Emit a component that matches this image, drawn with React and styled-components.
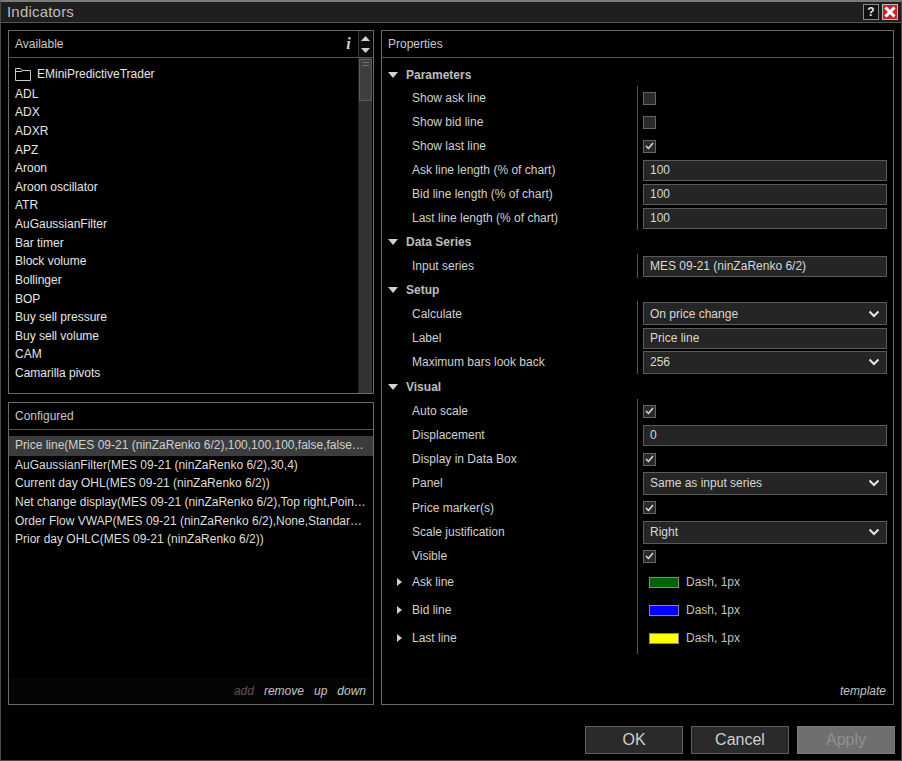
import React from 'react';
import styled, { createGlobalStyle } from 'styled-components';

const Global = createGlobalStyle`
  html, body { margin: 0; padding: 0; background: #000; }
  body { font-family: "Liberation Sans", Arial, sans-serif; font-size: 12px; color: #e4e4e4; }
  * { box-sizing: border-box; }
`;

const Win = styled.div`
  width: 902px; height: 761px; background: #000; border: 1px solid #4a4a4a; border-top: 2px solid #7a7a7a;
  display: flex; flex-direction: column; overflow: hidden;
`;
const TitleBar = styled.div`
  height: 21px; flex: none; background: #1f1f1f; border-bottom: 1px solid #555; display: flex; align-items: center;
  justify-content: space-between; padding: 0 3px 0 6px;
`;
const Title = styled.div`font-size: 15px; color: #bdbdbd; letter-spacing: .2px; margin-top: -2px;`;
const TitleBtns = styled.div`display: flex; gap: 3px;`;
const HelpBtn = styled.div`
  width: 16px; height: 16px; border: 1px solid #8a8a8a; background: #111; color: #e6e6e6;
  font-weight: bold; font-size: 12px; line-height: 14px; text-align: center;
`;
const CloseBtn = styled.div`
  width: 16px; height: 16px; background: #c8262c; border: 1px solid #bbb; display: flex; align-items: center; justify-content: center;
`;
const Body = styled.div`
  flex: none; display: grid; grid-template-columns: 366px 513px; column-gap: 7px; padding: 7px 0 0 7px; height: 682px; align-items: start;
`;
const Left = styled.div`display: flex; flex-direction: column; gap: 8px; height: 675px;`;
const Panel = styled.div`
  border: 1px solid #6a6a6a; background: #000; display: flex; flex-direction: column; position: relative;
  height: ${p => p.$h}px;
`;
const Head = styled.div`
  height: 27px; flex: none; border-bottom: 1px solid #555; display: flex; align-items: center;
  padding-left: 6px; color: #c8c8c8; justify-content: space-between;
`;
const InfoArea = styled.div`display: flex; align-items: stretch; height: 100%;`;
const InfoI = styled.div`
  font-family: "Liberation Serif", serif; font-style: italic; font-weight: bold; font-size: 16px; color: #d0d0d0;
  width: 15px; margin-right: 2px; display: flex; align-items: center; justify-content: center;
`;
const Spin = styled.div`
  width: 14px; background: #0c0c0c; border-left: 1px solid #3c3c3c; display: flex; flex-direction: column;
  align-items: center; justify-content: center; gap: 7px; margin-right: 1px;
`;
const ListArea = styled.div`flex: 1; display: flex; min-height: 0;`;
const List = styled.div`flex: 1; padding: 7px 0 0 6px; overflow: hidden;`;
const ListRow = styled.div`height: 18.63px; line-height: 18.63px; color: #e6e6e6; white-space: nowrap;`;
const FolderRow = styled(ListRow)`display: flex; align-items: center; gap: 6px; height: 19.67px; line-height: 19.67px;`;
const ScrollTrack = styled.div`width: 14px; margin-right: 1px; background: #333; border-left: 1px solid #222; flex: none;`;
const Thumb = styled.div`
  height: 42px; margin: 1px 0 0 0; background: #3e3e3e; border: 1px solid #5c5c5c; padding: 2px 2px 0;
`;
const Grip = styled.div`height: 1px; background: #707070; margin-bottom: 2px;`;
const CfgList = styled.div`flex: 1; padding-top: 6px; overflow: hidden;`;
const CfgRow = styled.div`
  height: ${p => p.$sel ? 19.5 : 18.7}px; line-height: ${p => p.$sel ? 19.5 : 18.7}px; padding: 0 6px; white-space: nowrap; overflow: hidden; text-overflow: ellipsis;
  background: ${p => p.$sel ? '#3c3c3c' : 'transparent'}; color: ${p => p.$sel ? '#cfcfcf' : '#dedede'};
`;
const Foot = styled.div`
  height: 26px; flex: none; display: flex; justify-content: flex-end; align-items: center; gap: 10px; padding-right: 7px;
  font-style: italic; background: #050505; color: #c4c4c4;
`;
const Muted = styled.span`color: #555;`;
const PropsBody = styled.div`flex: 1; padding-top: 5px; position: relative;`;
const Group = styled.div`
  height: ${p => p.$h || 24}px; display: flex; align-items: center; padding-left: 6px; font-weight: bold; color: #bdbdbd;
`;
const GroupLabel = styled.span`margin-left: 8px;`;
const Row = styled.div`
  height: ${p => p.$h || 24}px; display: grid; grid-template-columns: 255px 1fr; align-items: center;
`;
const Label = styled.div`padding-left: 30px; color: #d0d0d0; display: flex; align-items: center; position: relative;`;
const Caret = styled.span`position: absolute; left: 15px; top: 50%; margin-top: -4px; display: flex;`;
const Val = styled.div`
  height: 100%; border-left: 1px solid #555; padding: 0 6px 0 5px; display: flex; align-items: center; position: relative;
  ${p => p.$tail && `&::after { content: ''; position: absolute; left: -1px; top: 100%; height: 2px; width: 1px; background: #555; }`}
`;
const Check = styled.div`
  width: 13px; height: 13px; background: #2a2a2a; border: 1px solid #666; display: flex; align-items: center; justify-content: center;
`;
const Field = styled.div`
  width: 100%; height: ${p => p.$sel ? 23 : 21}px; background: #252525; border: 1px solid #5a5a5a; color: #d8d8d8; padding: 0 6px;
  display: flex; align-items: center; justify-content: space-between;
`;
const Swatch = styled.div`
  width: 30px; height: 11px; border: 1px solid #888; background: ${p => p.$c}; margin: 0 7px 0 6px;
`;
const LineVal = styled.span`color: #c4c4c4;`;
const Template = styled.div`
  position: absolute; right: 7px; bottom: 6px; font-style: italic; color: #c4c4c4;
`;
const Bottom = styled.div`
  flex: 1; display: flex; justify-content: flex-end; gap: 8px; padding: 21px 6px 0 0;
`;
const Btn = styled.div`
  width: 98px; height: 28px; background: ${p => p.$dis ? '#6f6f6f' : '#2a2a2a'}; border: 1px solid ${p => p.$dis ? '#7c7c7c' : '#606060'};
  color: ${p => p.$dis ? '#8f8f8f' : '#cfcfcf'}; font-size: 16px; display: flex; align-items: center; justify-content: center;
`;

const Down = () => <svg width="10" height="6" viewBox="0 0 10 6" style={{ flex: 'none' }}><path d="M0 0h10L5 6z" fill="#d0d0d0" /></svg>;
const Right = () => <svg width="5" height="8" viewBox="0 0 5 8"><path d="M0 0l5 4-5 4z" fill="#d0d0d0" /></svg>;
const Chevron = () => <svg width="12" height="8" viewBox="0 0 12 8"><path d="M1.5 1.5L6 6l4.5-4.5" fill="none" stroke="#e6e6e6" strokeWidth="2" /></svg>;
const Tick = () => <svg width="9" height="8" viewBox="0 0 9 8"><path d="M1 4l2.5 2.5L8 1" fill="none" stroke="#dcdcdc" strokeWidth="1.5" /></svg>;
const Folder = () => <svg width="16" height="13" viewBox="0 0 16 13"><path d="M.5 12.5V.5h5l1.5 2h8.500v10zM.5 3.500h6.500" fill="none" stroke="#c8c8c8" /></svg>;

const avail = ['ADL','ADX','ADXR','APZ','Aroon','Aroon oscillator','ATR','AuGaussianFilter','Bar timer','Block volume','Bollinger','BOP','Buy sell pressure','Buy sell volume','CAM','Camarilla pivots'];
const cfg = [
  'Price line(MES 09-21 (ninZaRenko 6/2),100,100,100,false,false,true,Same as input series)',
  'AuGaussianFilter(MES 09-21 (ninZaRenko 6/2),30,4)',
  'Current day OHL(MES 09-21 (ninZaRenko 6/2))',
  'Net change display(MES 09-21 (ninZaRenko 6/2),Top right,Points,Session)',
  'Order Flow VWAP(MES 09-21 (ninZaRenko 6/2),None,Standard,Session,Bar)',
  'Prior day OHLC(MES 09-21 (ninZaRenko 6/2))',
];

const G = ({ children, h }) => <Group $h={h}><Down /><GroupLabel>{children}</GroupLabel></Group>;
const P = ({ l, children, h, caret, tail }) => (
  <Row $h={h}>
    <Label>{caret && <Caret><Right /></Caret>}{l}</Label>
    <Val $tail={tail}>{children}</Val>
  </Row>
);
const C = ({ on }) => <Check>{on && <Tick />}</Check>;
const F = ({ children, sel }) => <Field $sel={sel}><span>{children}</span>{sel && <Chevron />}</Field>;
const L = ({ c }) => <><Swatch $c={c} /><LineVal>Dash, 1px</LineVal></>;

export default function App() {
  return (
    <Win>
      <Global />
      <TitleBar>
        <Title>Indicators</Title>
        <TitleBtns>
          <HelpBtn>?</HelpBtn>
          <CloseBtn><svg width="12" height="12" viewBox="0 0 12 12"><path d="M1.500 1.500l9 9M10.500 1.500l-9 9" stroke="#fff" strokeWidth="3" /></svg></CloseBtn>
        </TitleBtns>
      </TitleBar>
      <Body>
        <Left>
          <Panel $h={364}>
            <Head>
              Available
              <InfoArea>
                <InfoI>i</InfoI>
                <Spin>
                  <svg width="9" height="5" viewBox="0 0 9 5"><path d="M0 5h9L4.500 0z" fill="#d0d0d0" /></svg>
                  <svg width="9" height="5" viewBox="0 0 9 5"><path d="M0 0h9L4.500 5z" fill="#d0d0d0" /></svg>
                </Spin>
              </InfoArea>
            </Head>
            <ListArea>
              <List>
                <FolderRow><Folder />EMiniPredictiveTrader</FolderRow>
                {avail.map(a => <ListRow key={a}>{a}</ListRow>)}
              </List>
              <ScrollTrack>
                <Thumb><Grip /><Grip /></Thumb>
              </ScrollTrack>
            </ListArea>
          </Panel>
          <Panel $h={303}>
            <Head>Configured</Head>
            <CfgList>
              {cfg.map((c, i) => <CfgRow key={c} $sel={i === 0}>{c}</CfgRow>)}
            </CfgList>
            <Foot><Muted>add</Muted><span>remove</span><span>up</span><span>down</span></Foot>
          </Panel>
        </Left>
        <Panel $h={675}>
          <Head>Properties</Head>
          <PropsBody>
            <G h={23}>Parameters</G>
            <P l="Show ask line"><C /></P>
            <P l="Show bid line"><C /></P>
            <P l="Show last line"><C on /></P>
            <P l="Ask line length (% of chart)"><F>100</F></P>
            <P l="Bid line length (% of chart)"><F>100</F></P>
            <P l="Last line length (% of chart)"><F>100</F></P>
            <G>Data Series</G>
            <P l="Input series"><F>MES 09-21 (ninZaRenko 6/2)</F></P>
            <G h={23}>Setup</G>
            <P l="Calculate" h={25}><F sel>On price change</F></P>
            <P l="Label"><F>Price line</F></P>
            <P l="Maximum bars look back"><F sel>256</F></P>
            <G h={25}>Visual</G>
            <P l="Auto scale"><C on /></P>
            <P l="Displacement"><F>0</F></P>
            <P l="Display in Data Box"><C on /></P>
            <P l="Panel"><F sel>Same as input series</F></P>
            <P l="Price marker(s)" h={25}><C on /></P>
            <P l="Scale justification"><F sel>Right</F></P>
            <P l="Visible"><C on /></P>
            <P l="Ask line" h={28} caret><L c="#006400" /></P>
            <P l="Bid line" h={28} caret><L c="#0000ff" /></P>
            <P l="Last line" h={28} caret tail><L c="#ffff00" /></P>
            <Template>template</Template>
          </PropsBody>
        </Panel>
      </Body>
      <Bottom>
        <Btn>OK</Btn>
        <Btn>Cancel</Btn>
        <Btn $dis>Apply</Btn>
      </Bottom>
    </Win>
  );
}
